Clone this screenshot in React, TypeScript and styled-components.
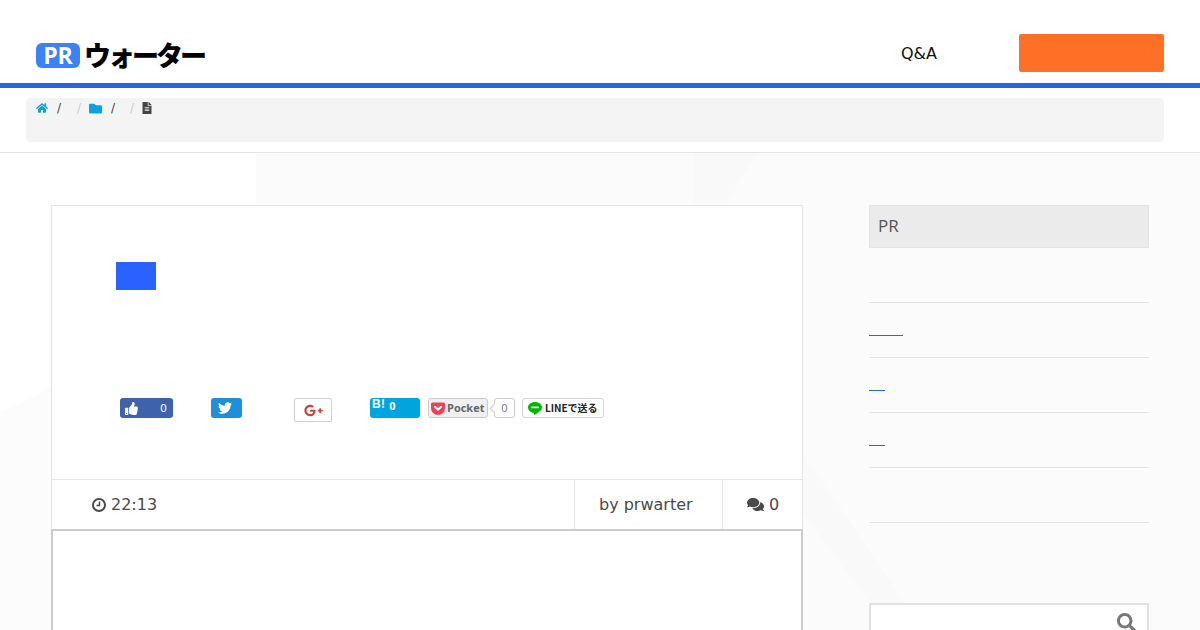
import styled, { createGlobalStyle } from 'styled-components';
import { FaHome, FaFolder, FaFileAlt, FaThumbsUp, FaTwitter, FaGooglePlusG, FaComments, FaSearch } from 'react-icons/fa';

const GlobalStyle = createGlobalStyle`
  html, body {
    margin: 0;
    padding: 0;
    background: #fff;
    font-family: "DejaVu Sans", sans-serif;
    color: #444;
  }
  * { box-sizing: border-box; }
`;

const Page = styled.div`
  position: relative;
  width: 1200px;
  height: 630px;
  overflow: hidden;
`;

const Header = styled.header`
  height: 88px;
  padding: 34px 36px 0 36px;
  border-bottom: 5px solid #2a62e0;
  display: flex;
  justify-content: space-between;
  background: #fff;
`;

const Logo = styled.div`
  display: flex;
  align-items: flex-start;
  gap: 4px;
  margin-top: 5px;
`;

const LogoBadge = styled.span`
  width: 44px;
  height: 25px;
  margin-top: 4px;
  border-radius: 6px;
  background: #3b82f6;
  color: #fff;
  font: 700 23px/25px "Open Sans", sans-serif;
  text-align: center;
`;

const LogoText = styled.span`
  font: 900 27px/32px "Noto Sans CJK JP", sans-serif;
  color: #000;
  letter-spacing: -3px;
`;

const Nav = styled.nav`
  display: flex;
  align-items: flex-start;
  gap: 82px;
`;

const NavLink = styled.span`
  font-size: 16px;
  line-height: 40px;
  color: #111;
`;

const CtaButton = styled.div`
  width: 145px;
  height: 38px;
  border-radius: 2px;
  background: #ff6f26;
`;

const BreadcrumbBar = styled.div`
  height: 65px;
  padding: 10px 36px 0 26px;
  border-bottom: 1px solid #e4e4e4;
  background: #fff;
`;

const Breadcrumb = styled.div`
  height: 44px;
  border-radius: 4px;
  background: #f4f4f4;
  padding: 3px 0 0 10px;
  display: flex;
  align-items: flex-start;
  font-size: 12px;
  line-height: 14px;
`;

const Crumb = styled.span<{ $w: number; $color: string }>`
  width: ${(p) => p.$w}px;
  height: 14px;
  display: flex;
  align-items: center;
  color: ${(p) => p.$color};
`;

const Sep = styled.span<{ $w: number; $faint?: boolean }>`
  width: ${(p) => p.$w}px;
  color: ${(p) => (p.$faint ? '#ccc' : '#444')};
`;

const Backdrop = styled.svg`
  position: absolute;
  left: 0;
  top: 153px;
  width: 1200px;
  height: 477px;
`;

const Content = styled.main`
  position: relative;
  display: flex;
  gap: 66px;
  padding: 52px 51px 0 51px;
`;

const Article = styled.article`
  width: 752px;
  flex: none;
  background: #fff;
  border: 1px solid #e5e5e5;
  border-bottom: none;
`;

const ArticleTop = styled.div`
  height: 273px;
  padding: 56px 0 0 64px;
`;

const Tag = styled.div`
  width: 40px;
  height: 28px;
  background: #2a62ff;
`;

const Social = styled.div`
  display: flex;
  align-items: flex-start;
  margin: 108px 0 0 4px;
`;

const FbButton = styled.div`
  width: 53px;
  height: 20px;
  border-radius: 3px;
  background: #3f62ad;
  color: #fff;
  display: flex;
  align-items: center;
  justify-content: space-between;
  padding: 0 6px 0 5px;
  font-size: 11px;
  margin-right: 38px;
`;

const TwButton = styled.div`
  width: 31px;
  height: 20px;
  border-radius: 3px;
  background: #1f8fdb;
  color: #fff;
  display: flex;
  align-items: center;
  padding-left: 7px;
  font-size: 14px;
  margin-right: 52px;
`;

const GpButton = styled.div`
  width: 38px;
  height: 24px;
  margin: 0 38px 0 0;
  border: 1px solid #d0d0d0;
  border-radius: 2px;
  background: #fff;
  color: #cb4437;
  display: flex;
  align-items: center;
  justify-content: center;
  font-size: 19px;
`;

const HatenaButton = styled.div`
  width: 50px;
  height: 20px;
  margin-right: 8px;
  border-radius: 3px;
  background: #00a4de;
  color: #fff;
  padding-left: 2px;
  font: 700 12px/13px "Liberation Sans", sans-serif;
  letter-spacing: 0.3px;
  display: flex;
  gap: 4px;
`;

const HatenaCount = styled.span`
  font: 700 11px/15px "Open Sans", sans-serif;
`;

const PocketButton = styled.div`
  width: 60px;
  height: 20px;
  margin-right: 6px;
  border: 1px solid #ccc;
  border-radius: 3px;
  background: #f0f0f0;
  display: flex;
  align-items: center;
  gap: 2px;
  padding-left: 2px;
  color: #666;
  font: 700 11px/18px "Open Sans", sans-serif;
`;

const PocketCount = styled.div`
  position: relative;
  width: 21px;
  height: 20px;
  margin-right: 7px;
  border: 1px solid #ccc;
  border-radius: 3px;
  background: #fff;
  color: #777;
  font: 400 11px/18px "Open Sans", sans-serif;
  text-align: center;
  &::before {
    content: '';
    position: absolute;
    left: -4px;
    top: 6px;
    width: 6px;
    height: 6px;
    background: #fff;
    border-left: 1px solid #ccc;
    border-bottom: 1px solid #ccc;
    transform: rotate(45deg);
  }
`;

const LineButton = styled.div`
  width: 82px;
  height: 20px;
  border: 1px solid #d5d5d5;
  border-radius: 3px;
  background: #fff;
  display: flex;
  align-items: center;
  gap: 3px;
  padding-left: 5px;
  color: #222;
  font: 700 10px/18px "Noto Sans CJK JP", sans-serif;
  letter-spacing: -0.05px;
`;

const Meta = styled.div`
  height: 50px;
  border-top: 1px solid #e5e5e5;
  display: flex;
  font-size: 16px;
  line-height: 49px;
`;

const MetaCell = styled.div<{ $w: number; $pad: number; $border?: boolean; $grow?: boolean }>`
  width: ${(p) => p.$w}px;
  flex: ${(p) => (p.$grow ? 1 : 'none')};
  padding-left: ${(p) => p.$pad}px;
  border-left: ${(p) => (p.$border ? '1px solid #e5e5e5' : 'none')};
  display: flex;
  align-items: center;
  gap: 5px;
  color: #4a4a4a;
`;

const ContentBox = styled.div`
  height: 110px;
  margin: 0 -1px;
  border: 2px solid #ccc;
  border-bottom: none;
  background: #fff;
`;

const Sidebar = styled.aside`
  width: 280px;
  flex: none;
`;

const SideTitle = styled.div`
  height: 43px;
  padding-left: 8px;
  background: #ebebeb;
  border: 1px solid #e4e4e4;
  font: 400 17px/40px "Open Sans", sans-serif;
  color: #555;
`;

const SideList = styled.ul`
  list-style: none;
  margin: 54px 0 0;
  padding: 0;
`;

const SideItem = styled.li`
  height: 55px;
  border-top: 1px solid #e4e4e4;
  padding-top: 28px;
`;

const SideLink = styled.span<{ $w: number }>`
  display: block;
  width: ${(p) => p.$w}px;
  height: 1px;
  margin-top: 4px;
  background: #1e73be;
`;

const SideEnd = styled.div`
  border-top: 1px solid #e4e4e4;
`;

const SearchBox = styled.div`
  height: 60px;
  margin-top: 80px;
  border: 2px solid #e2e2e2;
  border-bottom: none;
  background: #fff;
  display: flex;
  justify-content: flex-end;
  padding: 8px 11px 0 0;
  color: #777;
  font-size: 19px;
`;

export default function App() {
  return (
    <>
      <GlobalStyle />
      <Page>
        <Header>
          <Logo>
            <LogoBadge>PR</LogoBadge>
            <LogoText>ウォーター</LogoText>
          </Logo>
          <Nav>
            <NavLink>Q&amp;A</NavLink>
            <CtaButton />
          </Nav>
        </Header>
        <BreadcrumbBar>
          <Breadcrumb>
            <Crumb $w={21} $color="#0fa0e0"><FaHome /></Crumb>
            <Sep $w={20}>/</Sep>
            <Sep $w={12} $faint>/</Sep>
            <Crumb $w={22} $color="#0fa0e0"><FaFolder size={13} /></Crumb>
            <Sep $w={19}>/</Sep>
            <Sep $w={11} $faint>/</Sep>
            <Crumb $w={12} $color="#444"><FaFileAlt size={12} /></Crumb>
          </Breadcrumb>
        </BreadcrumbBar>
        <Backdrop viewBox="0 0 1200 477" aria-hidden="true">
          <rect width="1200" height="477" fill="#fbfbfb" />
          <polygon points="0,0 256,0 256,235 51,235 0,260" fill="#fff" />
          <polygon points="693,0 757,0 725,52 693,52" fill="#f9f9f9" />
          <polygon points="0,260 51,235 51,477 0,477" fill="#fcfcfc" />
          <polygon points="803,300 905,450 870,450 803,360" fill="#f9f9f9" />
        </Backdrop>
        <Content>
          <Article>
            <ArticleTop>
              <Tag />
              <Social>
                <FbButton><FaThumbsUp size={13} /><span>0</span></FbButton>
                <TwButton><FaTwitter /></TwButton>
                <GpButton><FaGooglePlusG /></GpButton>
                <HatenaButton>B!<HatenaCount>0</HatenaCount></HatenaButton>
                <PocketButton>
                  <svg width="14" height="13" viewBox="0 0 14 13">
                    <path d="M1.5 0.5h11A1.5 1.5 0 0 1 14 2v4a7 7 0 0 1-14 0V2A1.5 1.5 0 0 1 1.5 0.5z" fill="#ef4056" />
                    <path d="M4 4.8l3 3 3-3" fill="none" stroke="#fff" strokeWidth="2" strokeLinecap="round" strokeLinejoin="round" />
                  </svg>
                  Pocket
                </PocketButton>
                <PocketCount>0</PocketCount>
                <LineButton>
                  <svg width="14" height="13" viewBox="0 0 14 13">
                    <path d="M7 0C3.1 0 0 2.4 0 5.5c0 2.7 2.4 5 5.7 5.400.6.100.4 1 .3 1.600 0 .4.300.500.700.300 1-.6 4.300-2.500 5.900-4.300C13.600 7.500 14 6.600 14 5.500 14 2.400 10.900 0 7 0z" fill="#00b900" />
                    <rect x="3" y="4.600" width="8" height="1.600" fill="#fff" />
                  </svg>
                  LINEで送る
                </LineButton>
              </Social>
            </ArticleTop>
            <Meta>
              <MetaCell $w={522} $pad={40}>
                <svg width="14" height="14" viewBox="0 0 14 14">
                  <circle cx="7" cy="7" r="6" fill="none" stroke="currentColor" strokeWidth="2" />
                  <path d="M7.500 3.500v4H4.500" fill="none" stroke="currentColor" strokeWidth="1.500" />
                </svg>
                22:13
              </MetaCell>
              <MetaCell $w={148} $pad={24} $border>by prwarter</MetaCell>
              <MetaCell $w={80} $pad={24} $border $grow><FaComments size={17} />0</MetaCell>
            </Meta>
            <ContentBox />
          </Article>
          <Sidebar>
            <SideTitle>PR</SideTitle>
            <SideList>
              <SideItem><SideLink $w={34} /></SideItem>
              <SideItem><SideLink $w={16} /></SideItem>
              <SideItem><SideLink $w={16} /></SideItem>
              <SideItem />
            </SideList>
            <SideEnd />
            <SearchBox><FaSearch /></SearchBox>
          </Sidebar>
        </Content>
      </Page>
    </>
  );
}
